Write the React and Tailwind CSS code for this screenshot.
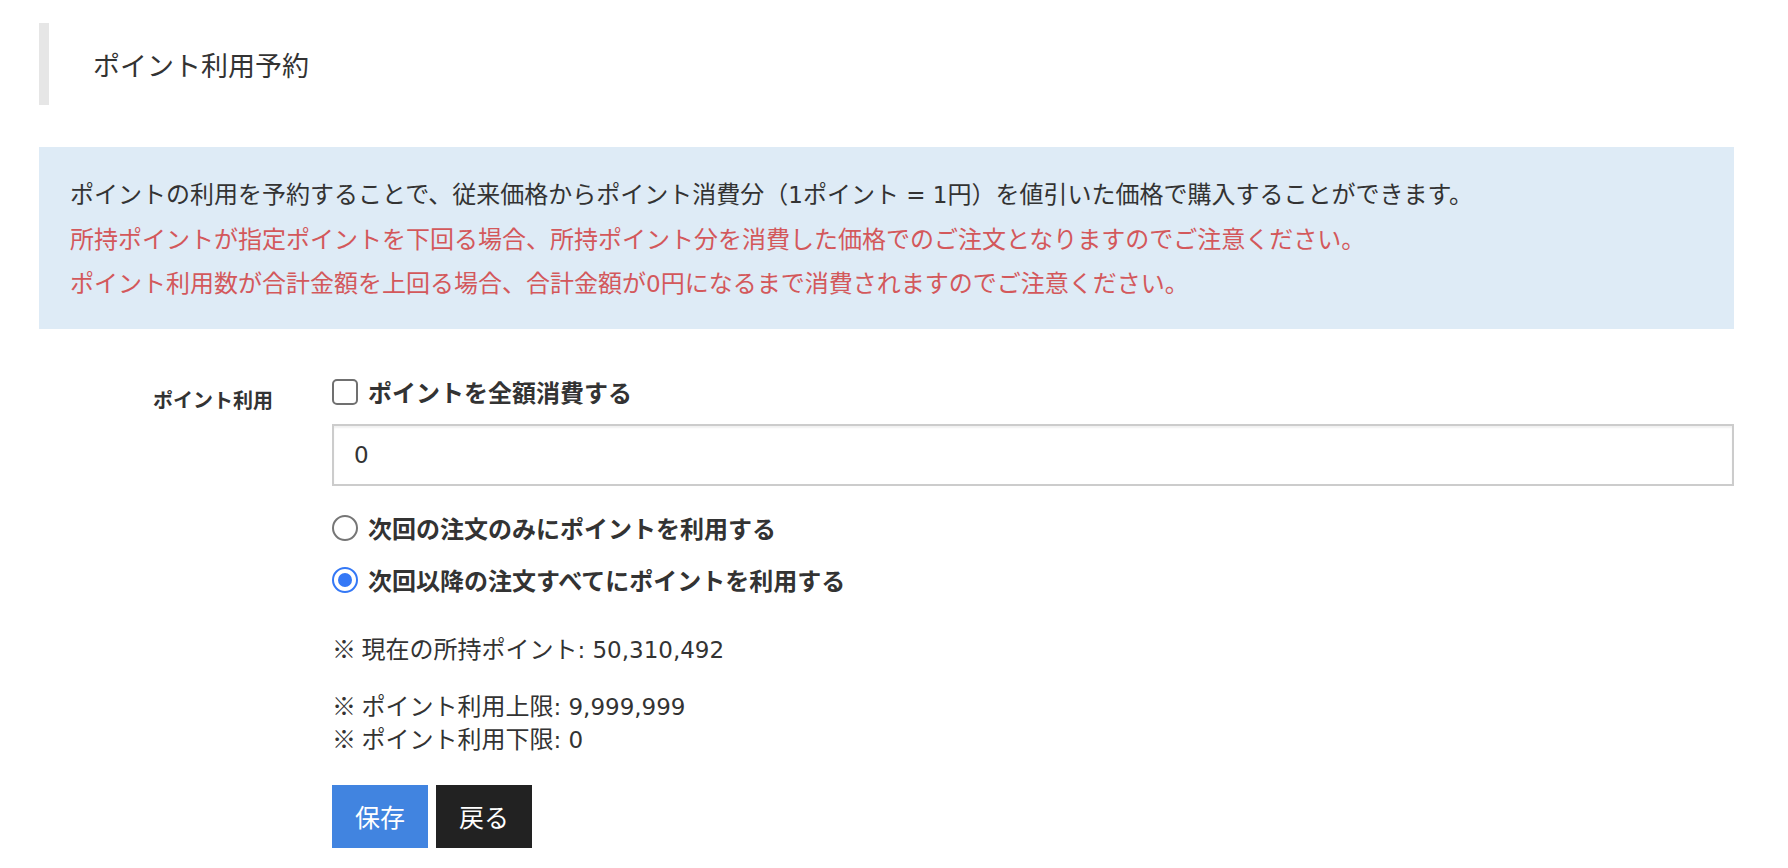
export default function App() {
  const lat = "font-['DejaVu_Sans',sans-serif] text-[23px] leading-none";
  return (
    <div className="min-h-screen bg-white text-[#333] font-['Noto_Sans_CJK_JP','Noto_Sans',sans-serif]">
      <div className="pl-[39px] pr-[54px] pt-[23px] pb-[20px]">
        <h1 className="flex h-[82px] items-center border-l-[10px] border-[#e6e6e6] pl-[44px] text-[27px] font-normal leading-none text-[#333]">
          ポイント利用予約
        </h1>

        <div className="mt-[42px] h-[182px] bg-[#deebf6] px-[31px] py-[24px] text-[24px] leading-[44.5px]">
          <p className="h-[44.5px] text-[#333]">
            ポイントの利用を予約することで、従来価格からポイント消費分（<span className="font-['DejaVu_Sans',sans-serif] text-[23px] leading-none">1</span>ポイント<span className="font-['DejaVu_Sans',sans-serif] text-[23px] leading-none"> = 1</span>円）を値引いた価格で購入することができます。
          </p>
          <p className="h-[44.5px] text-[#d3585b]">
            所持ポイントが指定ポイントを下回る場合、所持ポイント分を消費した価格でのご注文となりますのでご注意ください。
          </p>
          <p className="h-[44.5px] text-[#d3585b]">
            ポイント利用数が合計金額を上回る場合、合計金額が<span className="font-['DejaVu_Sans',sans-serif] text-[23px] leading-none">0</span>円になるまで消費されますのでご注意ください。
          </p>
        </div>

        <div className="mt-[46px] flex">
          <div className="w-[293px] shrink-0 pl-[114px] pt-[10px]">
            <span className="text-[20px] font-bold leading-[30px] text-[#333]">ポイント利用</span>
          </div>
          <div className="flex-1">
            <label className="flex h-[34px] items-center gap-[10px]">
              <span className="block h-[26px] w-[26px] rounded-[5px] border-2 border-[#707070] bg-white"></span>
              <span className="text-[24px] font-bold leading-[34px] text-[#333]">ポイントを全額消費する</span>
            </label>

            <div className="mt-[15px] flex h-[62px] items-center border-2 border-[#cccccc] bg-white pl-[20px] shadow-[inset_0_2px_2px_rgba(0,0,0,0.06)]">
              <span className="font-['DejaVu_Sans',sans-serif] text-[23px] leading-none text-[#333]">0</span>
            </div>

            <label className="mt-[25px] flex h-[34px] items-center gap-[10px]">
              <span className="block h-[26px] w-[26px] rounded-full border-2 border-[#767676] bg-white"></span>
              <span className="text-[24px] font-bold leading-[34px] text-[#333]">次回の注文のみにポイントを利用する</span>
            </label>

            <label className="mt-[18px] flex h-[34px] items-center gap-[10px]">
              <span className="flex h-[26px] w-[26px] items-center justify-center rounded-full border-[2.5px] border-[#3478f6] bg-white">
                <span className="block h-[14px] w-[14px] rounded-full bg-[#3478f6]"></span>
              </span>
              <span className="text-[24px] font-bold leading-[34px] text-[#333]">次回以降の注文すべてにポイントを利用する</span>
            </label>

            <p className="mt-[34px] h-[33px] text-[24px] leading-[33px] text-[#333]">
              ※ 現在の所持ポイント<span className={lat}>: 50,310,492</span>
            </p>

            <div className="mt-[24px] text-[24px] leading-[33px] text-[#333]">
              <p className="h-[33px]">
                ※ ポイント利用上限<span className={lat}>: 9,999,999</span>
              </p>
              <p className="h-[33px]">
                ※ ポイント利用下限<span className={lat}>: 0</span>
              </p>
            </div>

            <div className="mt-[31px] flex gap-[8px]">
              <button className="flex h-[63px] w-[96px] items-center justify-center bg-[#4184e0] text-[25px] text-white">
                保存
              </button>
              <button className="flex h-[63px] w-[96px] items-center justify-center bg-[#222222] text-[25px] text-white">
                戻る
              </button>
            </div>
          </div>
        </div>
      </div>
    </div>
  );
}
